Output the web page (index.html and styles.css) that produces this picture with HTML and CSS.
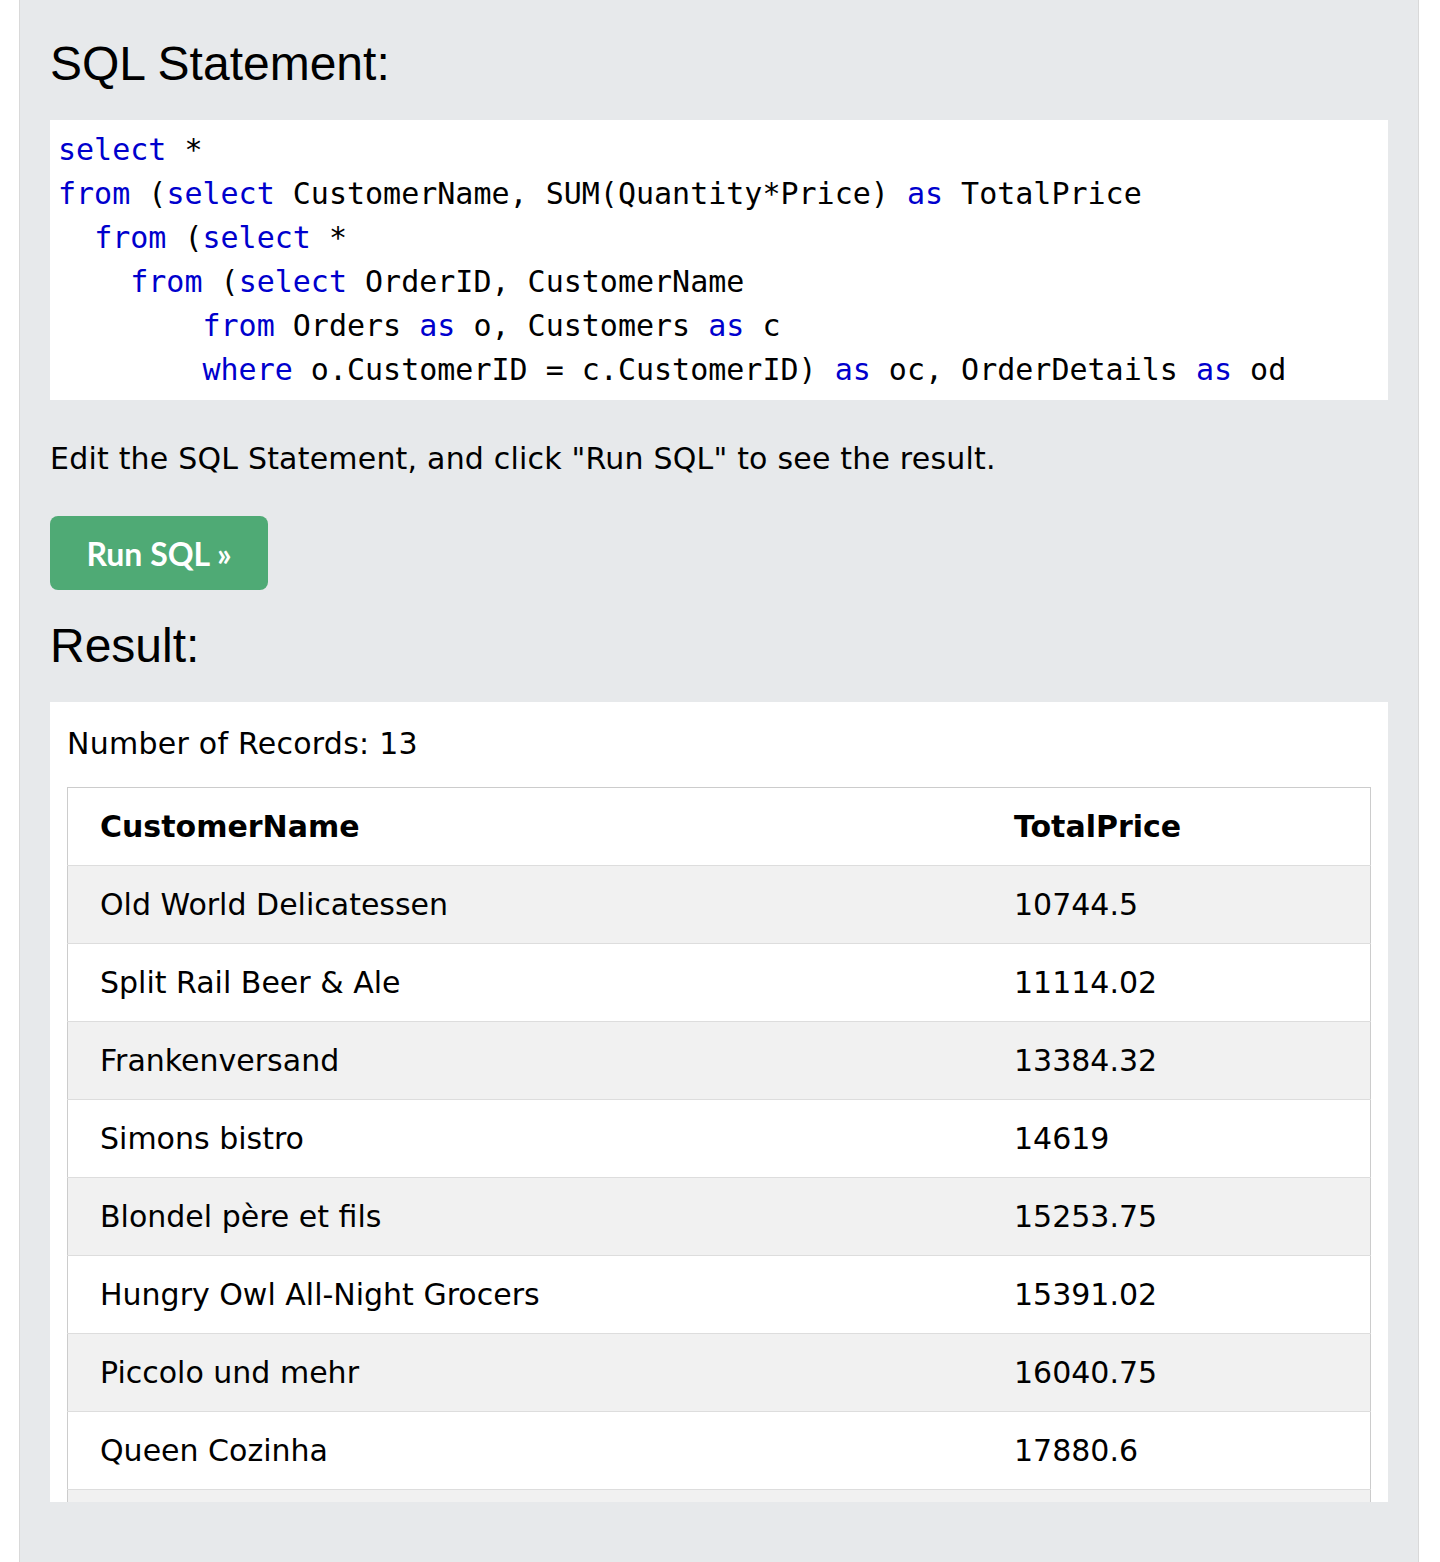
FILE: index.html
```html
<!DOCTYPE html>
<html lang="en">
<head>
<meta charset="utf-8">
<title>SQL Tryit</title>
<link rel="stylesheet" href="styles.css">
</head>
<body>
<div class="panel">
  <h2 class="heading heading-sql">SQL Statement:</h2>
  <div class="code-box">
<pre class="code"><span class="kw">select</span> *
<span class="kw">from</span> (<span class="kw">select</span> CustomerName, SUM(Quantity*Price) <span class="kw">as</span> TotalPrice
  <span class="kw">from</span> (<span class="kw">select</span> *
    <span class="kw">from</span> (<span class="kw">select</span> OrderID, CustomerName
        <span class="kw">from</span> Orders <span class="kw">as</span> o, Customers <span class="kw">as</span> c
        <span class="kw">where</span> o.CustomerID = c.CustomerID) <span class="kw">as</span> oc, OrderDetails <span class="kw">as</span> od
    <span class="kw">where</span> oc.OrderID = od.OrderID) <span class="kw">as</span> ocd, Products <span class="kw">as</span> p
  <span class="kw">where</span> ocd.ProductID = p.ProductID
  <span class="kw">group by</span> CustomerName) <span class="kw">as</span> t
<span class="kw">where</span> TotalPrice &gt; 10000
<span class="kw">order by</span> TotalPrice;</pre>
  </div>
  <p class="hint">Edit the SQL Statement, and click "Run SQL" to see the result.</p>
  <button class="run-btn" type="button">Run SQL »</button>
  <h2 class="heading heading-result">Result:</h2>
  <div class="result-box">
    <div class="records">Number of Records: 13</div>
    <table class="result-table">
      <thead>
        <tr><th class="col-name">CustomerName</th><th>TotalPrice</th></tr>
      </thead>
      <tbody>
        <tr><td>Old World Delicatessen</td><td>10744.5</td></tr>
        <tr><td>Split Rail Beer &amp; Ale</td><td>11114.02</td></tr>
        <tr><td>Frankenversand</td><td>13384.32</td></tr>
        <tr><td>Simons bistro</td><td>14619</td></tr>
        <tr><td>Blondel père et fils</td><td>15253.75</td></tr>
        <tr><td>Hungry Owl All-Night Grocers</td><td>15391.02</td></tr>
        <tr><td>Piccolo und mehr</td><td>16040.75</td></tr>
        <tr><td>Queen Cozinha</td><td>17880.6</td></tr>
        <tr><td>Hanari Carnes</td><td>18488.36</td></tr>
        <tr><td>Rattlesnake Canyon Grocery</td><td>21725.6</td></tr>
        <tr><td>QUICK-Stop</td><td>37217.31</td></tr>
        <tr><td>Save-a-lot Markets</td><td>57713.57</td></tr>
        <tr><td>Ernst Handel</td><td>35631.21</td></tr>
      </tbody>
    </table>
  </div>
</div>
</body>
</html>
```
FILE: styles.css
```css
html, body {
  margin: 0;
  padding: 0;
  background: #ffffff;
}

body {
  height: 1562px;
  overflow: hidden;
}

.panel {
  margin-left: 19px;
  width: 1338px;
  padding: 36px 30px 60px 30px;
  background: #e7e9eb;
  border-left: 1px solid #d9d9d9;
  border-right: 1px solid #d9d9d9;
  min-height: 1466px;
}

.heading {
  margin: 0;
  font-family: "Liberation Sans", Arial, sans-serif;
  font-weight: normal;
  font-size: 48px;
  line-height: 55px;
  color: #000;
}

.heading-sql {
  margin-bottom: 29px;
}

.code-box {
  background: #ffffff;
  height: 280px;
  overflow: hidden;
}

.code {
  margin: 0;
  padding: 8px 8px 0 8px;
  font-family: "DejaVu Sans Mono", "Liberation Mono", monospace;
  font-size: 30px;
  line-height: 44px;
  color: #000;
  white-space: pre;
}

.kw {
  color: #0000cd;
}

.hint {
  margin: 41px 0 0 0;
  font-family: "DejaVu Sans", Verdana, sans-serif;
  font-size: 30px;
  line-height: 36px;
  letter-spacing: 0.2px;
  color: #000;
}

.run-btn {
  display: block;
  margin-top: 39px;
  width: 218px;
  height: 74px;
  border: none;
  border-radius: 8px;
  background: #4faa75;
  color: #ffffff;
  font-family: Lato, "Open Sans", sans-serif;
  font-weight: bold;
  font-size: 32px;
  padding: 0;
  cursor: pointer;
}

.heading-result {
  margin-top: 28px;
  margin-bottom: 29px;
}

.result-box {
  background: #ffffff;
  height: 776px;
  padding: 24px 17px 0 17px;
  overflow: hidden;
}

.records {
  font-family: "DejaVu Sans", Verdana, sans-serif;
  font-size: 30px;
  line-height: 36px;
  letter-spacing: 0.25px;
  color: #000;
}

.result-table {
  margin-top: 25px;
  width: 100%;
  border-collapse: collapse;
  border: 1px solid #cccccc;
  font-family: "DejaVu Sans", Verdana, sans-serif;
  font-size: 30px;
  color: #000;
}

.result-table th,
.result-table td {
  text-align: left;
  padding: 16px 32px;
  line-height: 45px;
  border-bottom: 1px solid #dddddd;
  vertical-align: middle;
}

.result-table th {
  font-weight: bold;
}

.col-name {
  width: 850px;
}

.result-table tbody tr:nth-child(odd) {
  background: #f1f1f1;
}

.result-table tbody tr:nth-child(even) {
  background: #ffffff;
}
```
